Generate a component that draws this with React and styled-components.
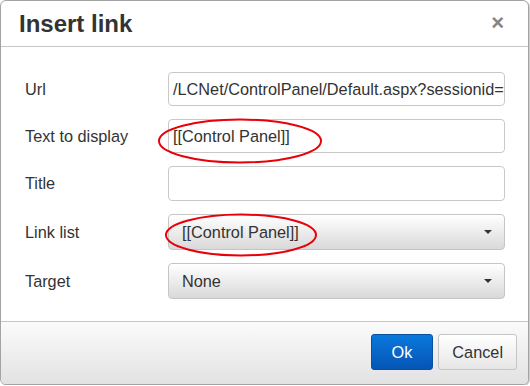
import React from "react";
import styled, { createGlobalStyle } from "styled-components";

const Global = createGlobalStyle`
  html, body { margin: 0; padding: 0; background: #fff; }
  body { font-family: "Liberation Sans", Arial, sans-serif; }
  * { box-sizing: border-box; }
`;

const Dialog = styled.div`
  position: relative;
  width: 529px;
  height: 385px;
  border: 1px solid #a3a3a3;
  border-radius: 6px;
  box-shadow: 1px 1px 0 #d0d0d0;
  overflow: hidden;
  display: flex;
  flex-direction: column;
  background: #fff;
`;

const Header = styled.div`
  height: 46px;
  flex: none;
  display: flex;
  align-items: flex-start;
  justify-content: space-between;
  padding: 11px 24px 0 18px;
  border-bottom: 1px solid #c5c5c5;
`;

const Title = styled.h1`
  margin: 0;
  font-size: 24px;
  line-height: 24px;
  font-weight: bold;
  color: #333;
`;

const Close = styled.button`
  border: 0;
  background: none;
  padding: 0;
  margin-top: 0;
  font-family: "Liberation Sans", Arial, sans-serif;
  font-size: 22px;
  line-height: 22px;
  font-weight: bold;
  color: #858585;
`;

const Body = styled.div`
  flex: 1;
  display: grid;
  grid-template-columns: 143px 337px;
  grid-template-rows: 34px 34px 35px 36px 36px;
  row-gap: 13px;
  align-items: center;
  align-content: start;
  padding: 25px 0 0 24px;
  position: relative;
`;

const Label = styled.label`
  font-size: 16.3px;
  color: #333;
`;

const Input = styled.div`
  height: 100%;
  border: 1px solid #c8c8c8;
  border-radius: 4px;
  padding: 0 4px;
  display: flex;
  align-items: center;
  font-size: 16.3px;
  color: #333;
  white-space: nowrap;
  overflow: hidden;
  background: #fff;
`;

const Select = styled.div`
  height: 100%;
  border: 1px solid #c5c5c5;
  border-radius: 4px;
  padding: 0 12px 0 13px;
  display: flex;
  align-items: center;
  justify-content: space-between;
  font-size: 16.3px;
  color: #333;
  background: linear-gradient(to bottom, #ffffff, #d9d9d9);
`;

const Caret = styled.span`
  width: 0;
  height: 0;
  border-left: 4px solid transparent;
  border-right: 4px solid transparent;
  border-top: 4px solid #333;
`;

const Footer = styled.div`
  height: 63px;
  flex: none;
  border-top: 1px solid #c5c5c5;
  background: linear-gradient(to bottom, #fbfbfb, #e2e2e2);
  display: flex;
  justify-content: flex-end;
  align-items: flex-start;
  gap: 5px;
  padding: 12px 11px 0 0;
`;

const Button = styled.button`
  height: 36px;
  padding: 0 ${(p) => (p.$primary ? "20px" : "13px")};
  border-radius: 3px;
  font-family: "Liberation Sans", Arial, sans-serif;
  font-size: 16.3px;
  color: ${(p) => (p.$primary ? "#fff" : "#333")};
  border: 1px solid ${(p) => (p.$primary ? "#0b4fa0" : "#c5c5c5")};
  background: ${(p) =>
    p.$primary
      ? "linear-gradient(to bottom, #0a78dc, #0555b5)"
      : "linear-gradient(to bottom, #ffffff, #e6e6e6)"};
`;

const Annotation = styled.svg`
  position: absolute;
  left: 0;
  top: 0;
  width: 529px;
  height: 385px;
  pointer-events: none;
  overflow: visible;
`;

const fields = [
  { label: "Url", kind: "input", value: "/LCNet/ControlPanel/Default.aspx?sessionid=" },
  { label: "Text to display", kind: "input", value: "[[Control Panel]]" },
  { label: "Title", kind: "input", value: "" },
  { label: "Link list", kind: "select", value: "[[Control Panel]]" },
  { label: "Target", kind: "select", value: "None" },
];

export default function App() {
  return (
    <>
      <Global />
      <Dialog>
        <Header>
          <Title>Insert link</Title>
          <Close>×</Close>
        </Header>
        <Body>
          {fields.map((f) => (
            <React.Fragment key={f.label}>
              <Label>{f.label}</Label>
              {f.kind === "input" ? (
                <Input>{f.value}</Input>
              ) : (
                <Select>
                  <span>{f.value}</span>
                  <Caret />
                </Select>
              )}
            </React.Fragment>
          ))}
        </Body>
        <Footer>
          <Button $primary>Ok</Button>
          <Button>Cancel</Button>
        </Footer>
        <Annotation viewBox="0 0 529 385">
          <ellipse cx="239" cy="140" rx="81" ry="21.5" fill="none" stroke="#e8000b" strokeWidth="2" />
          <ellipse cx="240" cy="234" rx="75" ry="20.5" fill="none" stroke="#e8000b" strokeWidth="2" />
        </Annotation>
      </Dialog>
    </>
  );
}
